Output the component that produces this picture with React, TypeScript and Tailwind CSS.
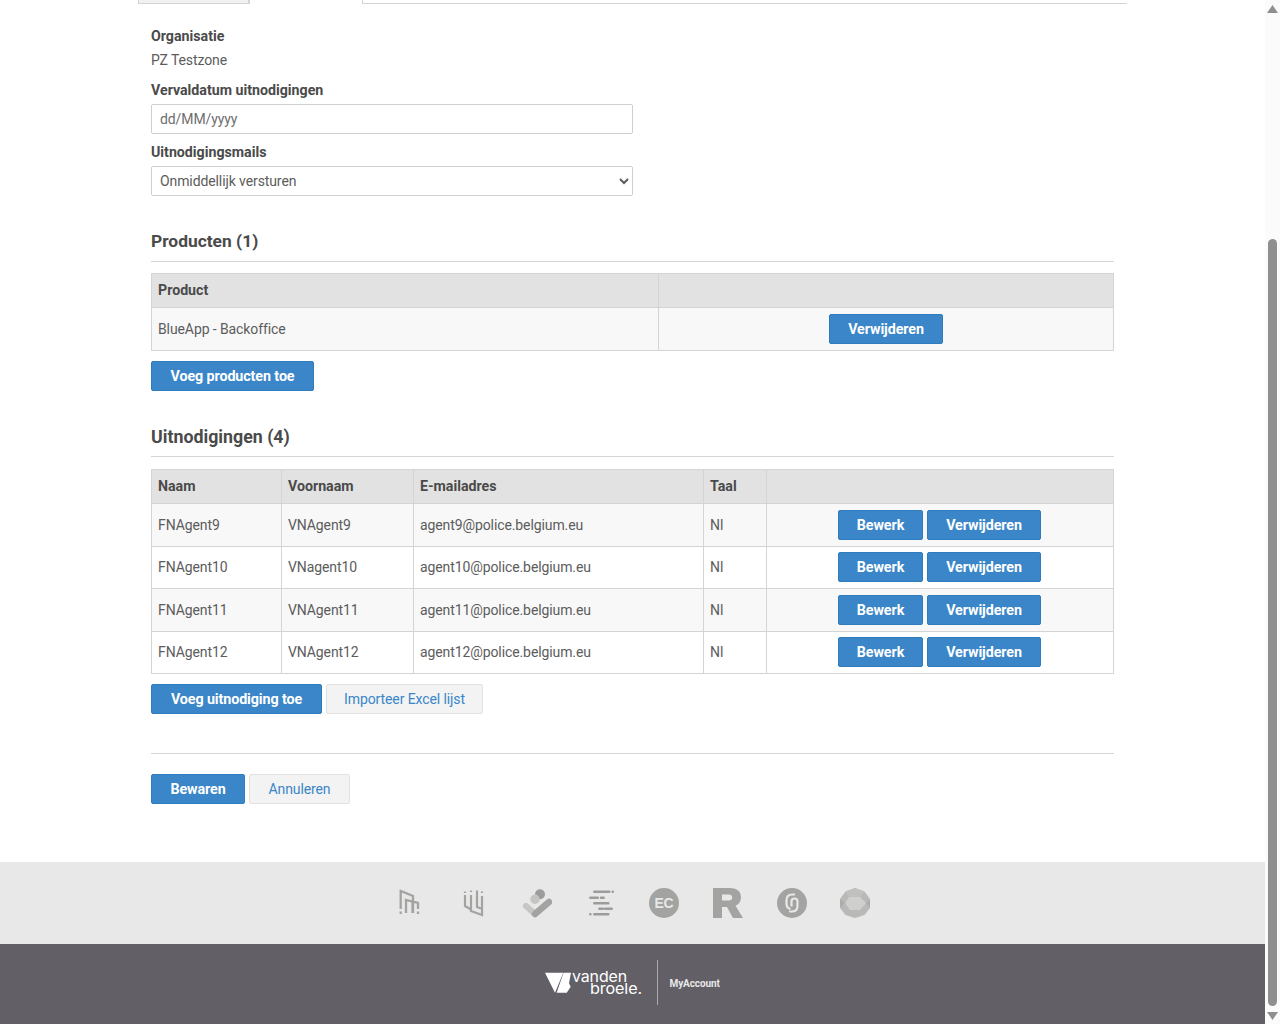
const invitations = [
  { naam: 'FNAgent9', voornaam: 'VNAgent9', email: 'agent9@police.belgium.eu' },
  { naam: 'FNAgent10', voornaam: 'VNagent10', email: 'agent10@police.belgium.eu' },
  { naam: 'FNAgent11', voornaam: 'VNAgent11', email: 'agent11@police.belgium.eu' },
  { naam: 'FNAgent12', voornaam: 'VNAgent12', email: 'agent12@police.belgium.eu' },
];

function PrimaryButton({ label, className = '' }: { label: string; className?: string }) {
  return (
    <button className={`h-[30px] rounded-[2px] border border-[#2e7cbd] bg-[#3a86c8] text-center text-[14.3px] font-bold leading-none text-white ${className}`}>
      {label}
    </button>
  );
}

function SecondaryButton({ label, className = '' }: { label: string; className?: string }) {
  return (
    <button className={`h-[30px] rounded-[2px] border border-[#e2e2e2] bg-[#f3f3f3] text-center text-[14px] leading-none text-[#3a86c8] ${className}`}>
      {label}
    </button>
  );
}

function FooterIcons() {
  return (
    <div className="flex h-[82px] items-center justify-center gap-[33.7px] bg-[#e8e8e8]">
      <svg width="30" height="30" viewBox="0 0 30 30" fill="none" stroke="#a3a3a1" strokeWidth="2.3">
        <path d="M5.700 21V3l12.300 5v17M11 25V12l12 3v6M17.500 13v12" />
        <path d="M5.700 23.500v2.500M23 23.500v2.500" />
      </svg>
      <svg width="30" height="30" viewBox="0 0 30 30" fill="none" stroke="#a3a3a1" strokeWidth="2.200">
        <path d="M7 7v11l6 3.500M13 7v16l11 4V8M19 2.500V19l4 1.500" />
        <path d="M7 3.500v1.500M13 2.500v1.500M24 3.500v1.500" />
      </svg>
      <svg width="30" height="30" viewBox="0 0 30 30">
        <circle cx="18" cy="6.300" r="5" fill="#9c9c9a" />
        <circle cx="13" cy="11.300" r="4.700" fill="#c4c4c2" />
        <path d="M4 18l9 8" stroke="#c6c6c4" strokeWidth="6.200" strokeLinecap="round" />
        <path d="M13 26L27 14" stroke="#a3a3a1" strokeWidth="6.500" strokeLinecap="round" />
      </svg>
      <svg width="30" height="30" viewBox="0 0 30 30" fill="none" stroke="#9c9c9a" strokeWidth="2.500" strokeLinecap="round">
        <path d="M8.300 3.700h15M26.700 3.700h.1M4.300 9.700h7.400M15 9.700h2.700M8.300 15.300h14M13.300 20.700h3.400M19 20.700h6.700M4.300 26.300h.1M8.300 26.300h14" />
      </svg>
      <svg width="30" height="30" viewBox="0 0 30 30">
        <circle cx="15" cy="15" r="15" fill="#a3a3a1" />
        <text x="15" y="20" textAnchor="middle" fill="#e8e8e8" fontFamily="'Liberation Sans', sans-serif" fontWeight="700" fontSize="14">EC</text>
      </svg>
      <svg width="30" height="30" viewBox="0 0 30 30">
        <path d="M0 0h17c7 0 11 3.500 11 9.500 0 4-2 6.800-5.500 8.200L30 30H20l-6-11H9v11H0zM9 6.500v6h7c2 0 3.200-1 3.200-3s-1.200-3-3.200-3z" fill="#a3a3a1" fillRule="evenodd" />
      </svg>
      <svg width="30" height="30" viewBox="0 0 30 30">
        <circle cx="15" cy="15" r="15" fill="#a3a3a1" />
        <path d="M18 6.500h-3c-4 0-5.500 3-5.500 6v3c0 3 1.500 5 4 5.500M12 23.500h3c4 0 5.500-3 5.500-6v-4c0-2-1.500-3-3-3s-3 1-3 3v5" fill="none" stroke="#e8e8e8" strokeWidth="2.200" />
      </svg>
      <svg width="30" height="30" viewBox="0 0 30 30">
        <path d="M15 0l9.500 3.500L30 11v9l-5.500 7L15 30l-9.500-3L0 20v-9l5.500-7.500z" fill="#b9b9b7" />
        <path d="M15 0l9.500 3.500L20 9H9L5.500 3.500z" fill="#c0c0be" />
        <path d="M9 9h11l6 6-6 7H10l-5-7z" fill="#cfcfcd" />
        <path d="M0 11l5 4-5 5zM30 11l-4 4 4 5z" fill="#adadab" />
      </svg>
    </div>
  );
}

function FooterBrand() {
  return (
    <div className="flex h-[80px] items-center justify-center bg-[#625f67] pb-[4px] text-white">
      <svg width="98" height="30" viewBox="0 0 98 30">
        <path d="M1 5.700h18.300L11 25.700z" fill="#fff" />
        <path d="M19.500 5.700H27l-2 10.600 1.700 3.400-4 6H12.700z" fill="#fff" />
        <text x="28" y="15" textLength="55" lengthAdjust="spacingAndGlyphs" fill="#fff" fontFamily="Inter, sans-serif" fontSize="15">vanden</text>
        <text x="46" y="26.500" textLength="52" lengthAdjust="spacingAndGlyphs" fill="#fff" fontFamily="Inter, sans-serif" fontSize="15">broele.</text>
      </svg>
      <div className="ml-[15px] mr-[12px] h-[45px] w-px bg-[#aaa9ad]" />
      <span className="mt-[2px] w-[52px] text-[10px] font-bold text-[#e8e8e8]">MyAccount</span>
    </div>
  );
}

export default function App() {
  return (
    <div className="flex h-[1024px] overflow-hidden bg-white font-['Roboto','Liberation_Sans',sans-serif] text-[14px] tracking-[-0.1px] text-[#5c5c5c]">
      <div className="flex min-w-0 flex-1 flex-col">
        <div className="ml-[138px] mr-[138px] flex h-[4px] items-start">
          <div className="h-[4px] w-[111px] border-x border-b border-[#d4d4d4] bg-[#f1f1f1]" />
          <div className="h-[4px] w-[113px] border-l border-[#d4d4d4]" />
          <div className="h-[4px] flex-1 border-b border-l border-[#d4d4d4]" />
        </div>

        <main className="ml-[151px] mr-[151px] flex-1 pt-[24px]">
          <label className="block text-[14.2px] font-bold leading-[16px] tracking-normal text-[#4a4a4a]">Organisatie</label>
          <p className="mt-[8px] leading-[16px]">PZ Testzone</p>

          <label className="mt-[14px] block text-[14.2px] font-bold leading-[16px] tracking-normal text-[#4a4a4a]">Vervaldatum uitnodigingen</label>
          <input
            readOnly
            placeholder="dd/MM/yyyy"
            className="mt-[6px] block h-[30px] w-[482px] rounded-[2px] border border-[#cfcfcf] px-[8px] pb-[1px] text-[14px] text-[#5c5c5c] placeholder:text-[#6e6e6e]"
          />

          <label className="mt-[10px] block text-[14.2px] font-bold leading-[16px] tracking-normal text-[#4a4a4a]">Uitnodigingsmails</label>
          <select className="mt-[6px] block h-[30px] w-[482px] rounded-[2px] border border-[#cfcfcf] bg-white px-[4px] pb-[1px] text-[14px] text-[#5c5c5c]">
            <option>Onmiddellijk versturen</option>
          </select>

          <h2 className="mt-[33px] text-[17.4px] font-bold leading-[24px] tracking-normal text-[#4a4a4a]">Producten (1)</h2>
          <hr className="mt-[8px] border-[#d4d4d4]" />

          <table className="mt-[11px] w-full table-fixed border-collapse border border-[#d4d4d4]">
            <colgroup>
              <col className="w-[507px]" />
              <col />
            </colgroup>
            <thead>
              <tr className="h-[34px] bg-[#e2e2e2] text-left text-[14.2px] tracking-normal text-[#4a4a4a]">
                <th className="border border-[#d4d4d4] px-[6px] font-bold">Product</th>
                <th className="border border-[#d4d4d4]" />
              </tr>
            </thead>
            <tbody>
              <tr className="h-[43px] bg-[#f8f8f8]">
                <td className="border border-[#d4d4d4] px-[6px]">BlueApp - Backoffice</td>
                <td className="border border-[#d4d4d4] text-center">
                  <PrimaryButton label="Verwijderen" className="w-[114px]" />
                </td>
              </tr>
            </tbody>
          </table>

          <PrimaryButton label="Voeg producten toe" className="mt-[10px] block w-[163px]" />

          <h2 className="mt-[34px] text-[17.8px] font-bold leading-[24px] tracking-normal text-[#4a4a4a]">Uitnodigingen (4)</h2>
          <hr className="mt-[7px] border-[#d4d4d4]" />

          <table className="mt-[12px] w-full table-fixed border-collapse border border-[#d4d4d4]">
            <colgroup>
              <col className="w-[130px]" />
              <col className="w-[132px]" />
              <col className="w-[290px]" />
              <col className="w-[63px]" />
              <col />
            </colgroup>
            <thead>
              <tr className="h-[34px] bg-[#e2e2e2] text-left text-[14.2px] tracking-normal text-[#4a4a4a]">
                <th className="border border-[#d4d4d4] px-[6px] font-bold">Naam</th>
                <th className="border border-[#d4d4d4] px-[6px] font-bold">Voornaam</th>
                <th className="border border-[#d4d4d4] px-[6px] font-bold">E-mailadres</th>
                <th className="border border-[#d4d4d4] px-[6px] font-bold">Taal</th>
                <th className="border border-[#d4d4d4]" />
              </tr>
            </thead>
            <tbody>
              {invitations.map((inv, i) => (
                <tr key={inv.naam} className={`h-[42.500px] ${i % 2 === 0 ? 'bg-[#f8f8f8]' : 'bg-white'}`}>
                  <td className="border border-[#d4d4d4] px-[6px] pt-[1px]">{inv.naam}</td>
                  <td className="border border-[#d4d4d4] px-[6px] pt-[1px]">{inv.voornaam}</td>
                  <td className="border border-[#d4d4d4] px-[6px] pt-[1px]">{inv.email}</td>
                  <td className="border border-[#d4d4d4] px-[6px] pt-[1px]">Nl</td>
                  <td className="border border-[#d4d4d4]">
                    <div className="flex justify-center gap-[4px] pr-[1px]">
                      <PrimaryButton label="Bewerk" className="w-[85px]" />
                      <PrimaryButton label="Verwijderen" className="w-[114px]" />
                    </div>
                  </td>
                </tr>
              ))}
            </tbody>
          </table>

          <div className="mt-[10px] flex gap-[4px]">
            <PrimaryButton label="Voeg uitnodiging toe" className="w-[171px]" />
            <SecondaryButton label="Importeer Excel lijst" className="w-[157px]" />
          </div>

          <hr className="mt-[39px] border-[#d4d4d4]" />

          <div className="mt-[20px] flex gap-[4px]">
            <PrimaryButton label="Bewaren" className="w-[94px]" />
            <SecondaryButton label="Annuleren" className="w-[101px]" />
          </div>
        </main>

        <FooterIcons />
        <FooterBrand />
      </div>

      <div className="flex w-[15px] flex-col items-center bg-[#fbfbfb]">
        <svg width="11" height="8" viewBox="0 0 11 8" className="mt-[5px]">
          <path d="M5.500 0L11 8H0z" fill="#8f8f8f" />
        </svg>
        <div className="mt-[226px] h-[767px] w-[9px] rounded-full bg-[#8f8f8f]" />
        <svg width="11" height="8" viewBox="0 0 11 8" className="mt-[6px]">
          <path d="M0 0h11L5.500 8z" fill="#8f8f8f" />
        </svg>
      </div>
    </div>
  );
}
